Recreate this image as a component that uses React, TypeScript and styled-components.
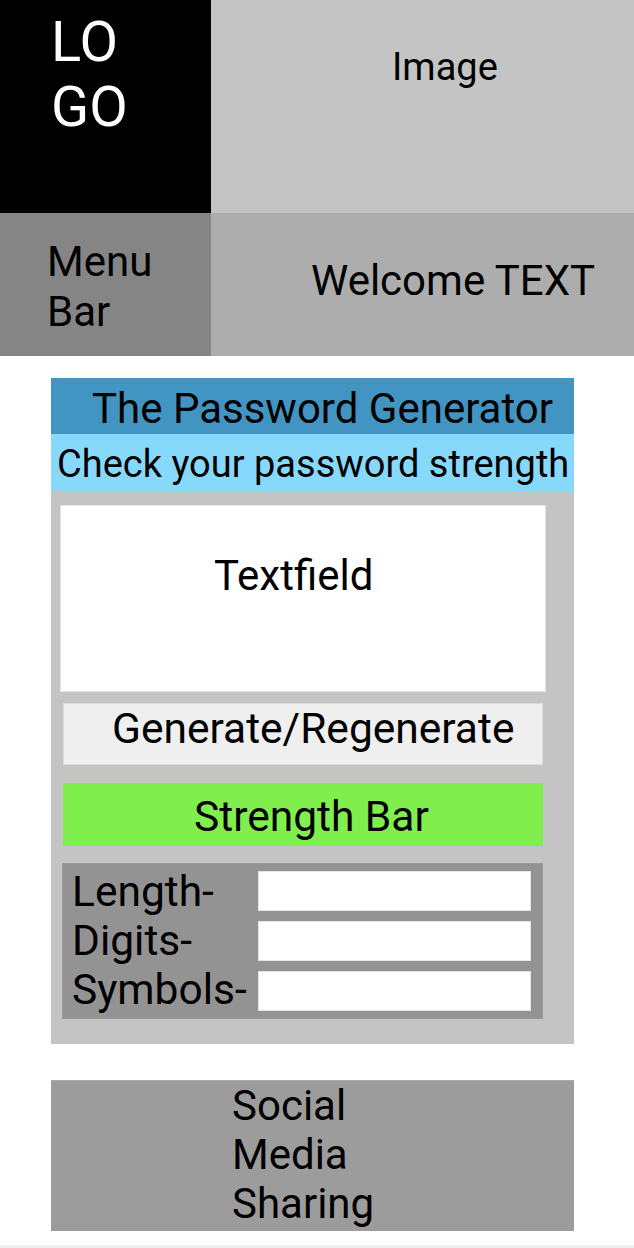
import styled, { createGlobalStyle } from "styled-components";

const GlobalStyle = createGlobalStyle`
    body {
        margin: 0;
        background: #ffffff;
        font-family: Roboto, "Liberation Sans", sans-serif;
        color: #000000;
    }
`;

const App = () => {
    return (
        <>
            <GlobalStyle />
            <Page>
                <TopGrid>
                    <Logo>
                        <LogoLine>LO</LogoLine>
                        <LogoLine>GO</LogoLine>
                    </Logo>
                    <ImageCell>Image</ImageCell>
                    <MenuCell>
                        Menu
                        <br />
                        Bar
                    </MenuCell>
                    <WelcomeCell>Welcome TEXT</WelcomeCell>
                </TopGrid>

                <Card>
                    <CardTitle>The Password Generator</CardTitle>
                    <CardSubtitle>Check your password strength</CardSubtitle>
                    <CardBody>
                        <Textfield>Textfield</Textfield>
                        <GenerateButton>Generate/Regenerate</GenerateButton>
                        <StrengthBar>Strength Bar</StrengthBar>
                        <Params>
                            <Labels>
                                <div>Length-</div>
                                <div>Digits-</div>
                                <div>Symbols-</div>
                            </Labels>
                            <Inputs>
                                <ParamInput />
                                <ParamInput />
                                <ParamInput />
                            </Inputs>
                        </Params>
                    </CardBody>
                </Card>

                <Social>
                    Social
                    <br />
                    Media
                    <br />
                    Sharing
                </Social>
                <Footer />
            </Page>
        </>
    );
};

export default App;

const Page = styled.div`
    width: 634px;
    display: flex;
    flex-direction: column;
`;

const TopGrid = styled.div`
    display: grid;
    grid-template-columns: 211px 1fr;
    grid-template-rows: 213px 143px;
`;

const Logo = styled.div`
    background: #000000;
    color: #ffffff;
    font-size: 56px;
    line-height: 65px;
    padding: 10px 0 0 51px;
`;

const LogoLine = styled.div``;

const ImageCell = styled.div`
    background: #c4c4c4;
    font-size: 38px;
    line-height: 44px;
    padding: 45px 0 0 181px;
`;

const MenuCell = styled.div`
    background: #858585;
    font-size: 42px;
    line-height: 50px;
    padding: 24px 0 0 47px;
`;

const WelcomeCell = styled.div`
    background: #adadad;
    font-size: 42px;
    line-height: 49px;
    padding: 43px 0 0 100px;
    white-space: nowrap;
`;

const Card = styled.div`
    width: 523px;
    margin: 22px 0 0 51px;
    background: #c4c4c4;
`;

const CardTitle = styled.div`
    height: 56px;
    box-sizing: border-box;
    background: #4295c2;
    font-size: 42px;
    line-height: 49px;
    padding: 6px 0 0 41px;
    white-space: nowrap;
`;

const CardSubtitle = styled.div`
    height: 57px;
    box-sizing: border-box;
    background: #87d9fb;
    font-size: 38px;
    line-height: 45px;
    padding: 8px 0 0 6px;
    white-space: nowrap;
`;

const CardBody = styled.div`
    display: flex;
    flex-direction: column;
    padding: 14px 0 25px 0;
`;

const Textfield = styled.div`
    width: 486px;
    height: 187px;
    box-sizing: border-box;
    margin-left: 9px;
    background: #ffffff;
    border: 1px solid #e2e2e2;
    font-size: 42px;
    line-height: 49px;
    padding: 45px 0 0 153px;
`;

const GenerateButton = styled.div`
    width: 480px;
    height: 62px;
    box-sizing: border-box;
    margin: 11px 0 0 12px;
    background: #efefef;
    border: 1px solid #dcdcdc;
    font-size: 42.5px;
    line-height: 49px;
    padding: 0 0 0 48px;
    white-space: nowrap;
`;

const StrengthBar = styled.div`
    width: 480px;
    height: 63px;
    box-sizing: border-box;
    margin: 18px 0 0 12px;
    background: #80ef4e;
    font-size: 42.5px;
    line-height: 49px;
    padding: 9px 0 0 131px;
    white-space: nowrap;
`;

const Params = styled.div`
    width: 481px;
    height: 156px;
    box-sizing: border-box;
    margin: 17px 0 0 11px;
    background: #939393;
    border: 1px solid #9a9a9a;
    display: flex;
    justify-content: space-between;
    padding: 7px 11px 0 9px;
`;

const Labels = styled.div`
    font-size: 42.5px;
    line-height: 49px;
    margin-top: -4px;
    white-space: nowrap;
`;

const Inputs = styled.div`
    display: flex;
    flex-direction: column;
    gap: 10px;
`;

const ParamInput = styled.div`
    width: 273px;
    height: 40px;
    box-sizing: border-box;
    background: #ffffff;
    border: 1px solid #e4e4e4;
`;

const Social = styled.div`
    width: 523px;
    height: 151px;
    box-sizing: border-box;
    margin: 36px 0 0 51px;
    background: #9c9c9c;
    border-top: 1px solid #a8a8a8;
    font-size: 42px;
    line-height: 49px;
    padding: 0 0 0 181px;
`;

const Footer = styled.div`
    height: 3px;
    margin-top: 14px;
    background: #eeeeee;
`;
